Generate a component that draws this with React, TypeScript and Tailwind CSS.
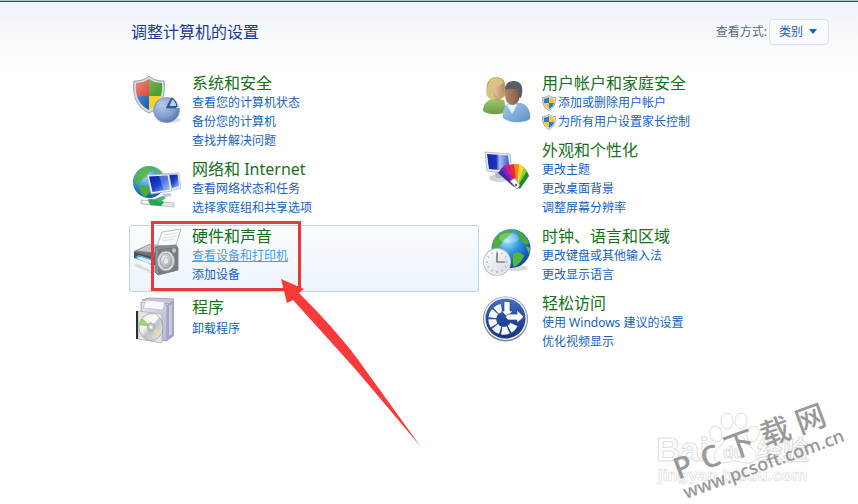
import type { ReactNode } from "react";

interface CategoryLink {
  label: string;
  shield?: boolean;
}

interface Category {
  title: string;
  icon: ReactNode;
  links: CategoryLink[];
  active?: boolean;
}

const ICON = "h-12 w-12 shrink-0";

function SecurityIcon() {
  return (
    <svg className={ICON} viewBox="0 0 48 48" aria-hidden="true">
      <defs>
        <clipPath id="sec-shield">
          <path d="M16 3C20 6 25 7 29 7C30 20 26 29 16 34C6 29 2 20 3 7C7 7 12 6 16 3Z" />
        </clipPath>
        <linearGradient id="sec-shine" x1="0" y1="0" x2="1" y2="1">
          <stop offset="0" stopColor="#fff" stopOpacity=".5" />
          <stop offset=".6" stopColor="#fff" stopOpacity="0" />
        </linearGradient>
        <radialGradient id="sec-disc" cx=".35" cy=".3" r=".8">
          <stop offset="0" stopColor="#b5cbe8" />
          <stop offset=".6" stopColor="#7f9fce" />
          <stop offset="1" stopColor="#4f70a8" />
        </radialGradient>
      </defs>
      <ellipse cx="36" cy="44" rx="12" ry="3" fill="#000" opacity=".12" />
      <path d="M16 0C20 4 26 5 31 5C33 20 28 32 16 37C4 32 -1 20 1 5C6 5 12 4 16 0Z" fill="#d9dcdf" stroke="#9ba0a5" strokeWidth="1" />
      <g clipPath="url(#sec-shield)">
        <path d="M0 0H16V20H0Z" fill="#d93a2b" />
        <path d="M16 0H32V20H16Z" fill="#4aa02c" />
        <path d="M0 20H16V38H0Z" fill="#2560b4" />
        <path d="M16 20H32V38H16Z" fill="#f6cf27" />
        <path d="M0 0H32V38H0Z" fill="url(#sec-shine)" />
      </g>
      <ellipse cx="33.500" cy="34" rx="13" ry="12.500" fill="url(#sec-disc)" stroke="#6583b5" strokeWidth=".6" />
      <path d="M32 33L38 21C43 23 46 27 46.500 32Z" fill="#dfe9f6" />
      <path d="M32.500 32.500L38 21.500L39.500 22L44 31L43 32.500Z" fill="#32569b" />
      <path d="M35.500 30.500L39 22.500C42 24 43.500 27 44 30.500Z" fill="#b9cfec" stroke="#2f5090" strokeWidth="1.200" />
    </svg>
  );
}

function NetworkIcon() {
  return (
    <svg className={ICON} viewBox="0 0 48 48" aria-hidden="true">
      <defs>
        <radialGradient id="net-globe" cx=".4" cy=".3" r=".8">
          <stop offset="0" stopColor="#9fe0ff" />
          <stop offset=".5" stopColor="#2f8fd4" />
          <stop offset="1" stopColor="#0d4a93" />
        </radialGradient>
        <linearGradient id="net-screen" x1="0" y1="0" x2="1" y2="1">
          <stop offset="0" stopColor="#0b1d9b" />
          <stop offset=".5" stopColor="#1a3fd0" />
          <stop offset="1" stopColor="#9cc5ff" />
        </linearGradient>
      </defs>
      <circle cx="16" cy="20" r="16" fill="url(#net-globe)" />
      <path d="M2 14C5 7 11 4 17 4C23 5 21 9 17 10C14 11 16 15 11 16C8 17 7 22 3 23C1 20 1 17 2 14Z" fill="#55b33f" opacity=".85" />
      <path d="M6 24C10 22 15 24 17 28C16 32 13 35 11 35C8 32 7 28 6 24Z" fill="#4bb02f" />
      <path d="M21 5C26 6 29 9 31 13L24 12Z" fill="#6abf4a" opacity=".7" />
      <path d="M27 12L46 11L48 26L41 28Z" fill="#e4e9f1" stroke="#a5afbe" strokeWidth=".6" />
      <path d="M35 13L44.500 12.500L46 24L39 26Z" fill="url(#net-screen)" />
      <path d="M14 13L36 12L39 29L18 32Z" fill="#f1f4f8" stroke="#a3adbb" strokeWidth=".7" />
      <path d="M16 14.500L34.500 13.500L37 27.500L19.500 30Z" fill="url(#net-screen)" />
      <path d="M26 14L34.500 13.500L37 27.500L31 28.500Z" fill="#c9deff" opacity=".35" />
      <path d="M29 32L37 31L39 34L31 35Z" fill="#c3cad4" />
      <path d="M8 38L41 41V45L8 42Z" fill="#e2e6e8" stroke="#aab2b5" strokeWidth=".7" />
      <path d="M15 37L27 37.500L31 40L28 44L17 43Z" fill="#2ca35c" />
      <path d="M21 37L30 34L33 36L27 40Z" fill="#43bb73" />
      <path d="M9 39L15 39.600V41L9 40.500Z" fill="#fff" />
    </svg>
  );
}

function HardwareIcon() {
  return (
    <svg className={ICON} viewBox="0 0 48 48" aria-hidden="true">
      <defs>
        <linearGradient id="hw-body" x1="0" y1="0" x2="0" y2="1">
          <stop offset="0" stopColor="#a9adb2" />
          <stop offset=".5" stopColor="#6b7076" />
          <stop offset="1" stopColor="#43474d" />
        </linearGradient>
        <radialGradient id="hw-cone" cx=".4" cy=".35" r=".7">
          <stop offset="0" stopColor="#f5f6f7" />
          <stop offset="1" stopColor="#9a9fa5" />
        </radialGradient>
      </defs>
      <path d="M3 34L22 43L20 45L1 37Z" fill="#000" opacity=".1" />
      <path d="M24 17L29 3L48 0L42 19Z" fill="#f8f9fa" stroke="#a9adb1" strokeWidth=".8" />
      <path d="M31 6L44 4M30 9L43 7M29 12L42 10" stroke="#d5d8db" strokeWidth=".8" />
      <path d="M1 22L16 15L40 17L34 30L22 36L1 28Z" fill="url(#hw-body)" />
      <path d="M4 21.500L16 16L38 17.500L26 24Z" fill="#c4c7cb" />
      <path d="M1 23L22 29V36L1 29Z" fill="#4b5056" />
      <path d="M2 28L6 26L22 31L18 36Z" fill="#58a9dc" />
      <path d="M3 29L8 28L20 32L17 35Z" fill="#d7effb" />
      <path d="M22 18L43 16L45 19V41L25 46L22 43Z" fill="#8b9096" stroke="#6a6f75" strokeWidth=".8" />
      <path d="M25 20L45 18V41L25 46Z" fill="#777c82" />
      <ellipse cx="33" cy="32" rx="8.500" ry="10" fill="#dcdfe2" stroke="#a2a7ac" strokeWidth="1" />
      <ellipse cx="33" cy="32" rx="6" ry="7.500" fill="url(#hw-cone)" stroke="#8d9298" strokeWidth=".7" />
      <ellipse cx="33" cy="32" rx="2.500" ry="3.500" fill="#e9ebed" stroke="#9da2a8" strokeWidth=".6" />
      <ellipse cx="41" cy="21.500" rx="2" ry="2.200" fill="#c4c8cc" />
    </svg>
  );
}

function ProgramsIcon() {
  return (
    <svg className={ICON} viewBox="0 0 48 48" aria-hidden="true">
      <defs>
        <linearGradient id="pr-box" x1="0" y1="0" x2="1" y2="1">
          <stop offset="0" stopColor="#e3e4f2" />
          <stop offset="1" stopColor="#b4b6d2" />
        </linearGradient>
        <linearGradient id="pr-disc" x1="0" y1="0" x2="1" y2="1">
          <stop offset="0" stopColor="#d3d7d6" />
          <stop offset=".35" stopColor="#fafafa" />
          <stop offset=".55" stopColor="#bfc4c2" />
          <stop offset="1" stopColor="#f1f0e8" />
        </linearGradient>
      </defs>
      <path d="M9 4L16 2L41 3L36 8Z" fill="#c5c6df" stroke="#9193b5" strokeWidth=".8" />
      <path d="M8 6L34 9V45L8 41Z" fill="url(#pr-box)" stroke="#9294b4" strokeWidth=".8" />
      <path d="M34 9L41 4V40L34 45Z" fill="#a3a5c6" />
      <path d="M36 10L39 8V38L36 40Z" fill="#c9cae0" />
      <path d="M13 4L32 6L30 14L10 12Z" fill="#f6f6fc" stroke="#b1b3cf" strokeWidth=".6" />
      <path d="M5 15L29 18V47L5 43Z" fill="#e3e6e6" stroke="#a5aaa9" strokeWidth=".7" />
      <path d="M3 15H5V43H3Z" fill="#2c2f31" />
      <ellipse cx="18" cy="31" rx="12" ry="13.500" fill="url(#pr-disc)" stroke="#9ea3a2" strokeWidth=".8" />
      <path d="M18 31L6 29L9 22Z" fill="#8fcf50" opacity=".85" />
      <path d="M18 31L29 36L25 42Z" fill="#e6dfa4" opacity=".7" />
      <path d="M18 31L21 18L26 21Z" fill="#fff" opacity=".9" />
      <ellipse cx="18" cy="31" rx="3.500" ry="4" fill="#c7cbca" stroke="#8f9594" strokeWidth=".7" />
      <ellipse cx="18" cy="31" rx="1.300" ry="1.600" fill="#fff" />
    </svg>
  );
}

function UsersIcon() {
  return (
    <svg className={ICON} viewBox="0 0 48 48" aria-hidden="true">
      <defs>
        <linearGradient id="us-green" x1="0" y1="0" x2="0" y2="1">
          <stop offset="0" stopColor="#a3c971" />
          <stop offset="1" stopColor="#6b9c45" />
        </linearGradient>
        <linearGradient id="us-blue" x1="0" y1="0" x2="1" y2="1">
          <stop offset="0" stopColor="#a9cdf0" />
          <stop offset="1" stopColor="#5b8fc9" />
        </linearGradient>
        <linearGradient id="us-face" x1="0" y1="0" x2="1" y2="0">
          <stop offset="0" stopColor="#e6c39d" />
          <stop offset="1" stopColor="#b98960" />
        </linearGradient>
        <linearGradient id="us-dark" x1="0" y1="0" x2="1" y2="0">
          <stop offset="0" stopColor="#b58763" />
          <stop offset="1" stopColor="#7a5a46" />
        </linearGradient>
      </defs>
      <path d="M0 35C0 28 4 24 11 22L21 24L24 36C16 39 5 39 0 35Z" fill="url(#us-green)" />
      <path d="M4 20C3 11 3 2 13 1C21 1 23 6 22 13L22 20L15 25Z" fill="#bfa565" />
      <path d="M11 10C15 10 18 8 20 6C22.500 10 22 19 18 22C13 23 10 17 11 10Z" fill="url(#us-face)" />
      <path d="M4 20C4 10 5 2 13 1.500C20 2 21 6 19 8C15 11 11 10 11 14C10 18 11 21 13 23C9 24 6 23 4 20Z" fill="#d9c283" />
      <path d="M20 42C19 34 22 29 28 26L38 27C45 29 48 36 47 43C39 48 26 47 20 42Z" fill="url(#us-blue)" />
      <path d="M24 29L29 38L34 29L31 27Z" fill="#e8f2fb" />
      <path d="M22 15C21 9 25 6 31 6C38 6 39 11 37 17L36 24C33 30 28 30 25 27C22 24 22 19 22 15Z" fill="url(#us-dark)" />
      <path d="M22 13C23 7 26 5 31 5C39 5 41 12 38 22L35 21L35 14C31 12 26 14 22 13Z" fill="#5a5d64" />
    </svg>
  );
}

function AppearanceIcon() {
  return (
    <svg className={ICON} viewBox="0 0 48 48" aria-hidden="true">
      <defs>
        <linearGradient id="ap-screen" x1="0" y1="0" x2="1" y2="0">
          <stop offset="0" stopColor="#1627a9" />
          <stop offset=".4" stopColor="#1a2fbd" />
          <stop offset=".55" stopColor="#a9c0f2" />
          <stop offset="1" stopColor="#3152cd" />
        </linearGradient>
      </defs>
      <ellipse cx="17" cy="35" rx="11" ry="4" fill="#d0d3d7" />
      <path d="M12 28H20L19 35H13Z" fill="#b3b9c1" />
      <path d="M2 9L27 11L29 31L4 28Z" fill="#e8edf3" stroke="#a9b1bd" strokeWidth=".8" />
      <path d="M4 11L25 12.500L27 28L6 26Z" fill="url(#ap-screen)" />
      <path d="M31 44L15 30L19 25L35 41Z" fill="#3d2a9d" />
      <path d="M32 44L18 26L22 22L36 41Z" fill="#7a23bd" />
      <path d="M33 44L21 23L26 21L37 41Z" fill="#d21b8e" />
      <path d="M33 44L26 22L31 21L38 41Z" fill="#e62f33" />
      <path d="M34 44L31 21L36 21L39 41Z" fill="#f28a1b" />
      <path d="M34 44L36 21L41 24L39 41Z" fill="#f4da29" />
      <path d="M34 44L41 24L44 28L39 42Z" fill="#8ed02d" />
      <path d="M34 44L44 28L46 33L37 46Z" fill="#248b34" />
      <path d="M27 38L32 35L37 42L34 46Z" fill="#f3f4f6" stroke="#8b8f96" strokeWidth=".7" />
      <circle cx="33" cy="42" r="1.200" fill="#666" />
    </svg>
  );
}

function ClockIcon() {
  return (
    <svg className={ICON} viewBox="0 0 48 48" aria-hidden="true">
      <defs>
        <radialGradient id="ck-globe" cx=".4" cy=".3" r=".75">
          <stop offset="0" stopColor="#a9e8ff" />
          <stop offset=".45" stopColor="#2c8fdd" />
          <stop offset="1" stopColor="#0b3f97" />
        </radialGradient>
        <linearGradient id="ck-face" x1="0" y1="0" x2="1" y2="1">
          <stop offset="0" stopColor="#fff" />
          <stop offset="1" stopColor="#d3dae0" />
        </linearGradient>
      </defs>
      <ellipse cx="33" cy="39" rx="12" ry="3" fill="#000" opacity=".15" />
      <circle cx="28" cy="19.500" r="19.500" fill="url(#ck-globe)" />
      <path d="M10 14C12 7 19 1 27 1C31 2 30 5 26 6C25 9 20 10 19 14C17 18 12 19 9 20Z" fill="#4faf3c" />
      <path d="M31 1C38 2 44 8 46 14C45 17 42 15 39 13C36 11 37 7 31 1Z" fill="#4da63a" />
      <path d="M30 25C34 22 39 24 41 27C39 32 35 36 31 38C29 34 30 30 30 25Z" fill="#55b53a" />
      <path d="M43 17L47 19L46 25Z" fill="#6abd43" />
      <ellipse cx="26" cy="9" rx="10" ry="5" fill="#fff" opacity=".25" />
      <circle cx="14" cy="33" r="14" fill="#c0c5ca" />
      <circle cx="14" cy="33" r="12.500" fill="url(#ck-face)" stroke="#f5f6f7" strokeWidth="1" />
      <path d="M14 22V24M14 42V44M3 33H5M23 33H25M8.500 23.500L9.500 25.200M19.500 23.500L18.500 25.200M4.500 27.500L6.200 28.500M23.500 27.500L21.800 28.500M4.500 38.500L6.200 37.500M23.500 38.500L21.800 37.500M8.500 42.500L9.500 40.800M19.500 42.500L18.500 40.800" stroke="#9ba0a5" strokeWidth="1" />
      <path d="M14 24V33H22" fill="none" stroke="#4a5056" strokeWidth="1.200" />
    </svg>
  );
}

function EaseIcon() {
  return (
    <svg className={ICON} viewBox="0 0 48 48" aria-hidden="true">
      <defs>
        <linearGradient id="ea-bg" x1="0" y1="0" x2="0" y2="1">
          <stop offset="0" stopColor="#4a6fc4" />
          <stop offset=".5" stopColor="#2648a3" />
          <stop offset="1" stopColor="#16357f" />
        </linearGradient>
      </defs>
      <circle cx="22.500" cy="23" r="22.500" fill="#7d8594" />
      <circle cx="22.500" cy="22.500" r="21.500" fill="#f3f5f8" />
      <circle cx="22.500" cy="22.500" r="20" fill="url(#ea-bg)" />
      <path d="M31 28.500A11.500 11.500 0 1 1 18.500 12" fill="none" stroke="#f4f7fc" strokeWidth="8" strokeDasharray="6.500 1.500" />
      <path d="M21 5.500H27V15H30L24 21L18.500 15H21Z" fill="#fff" stroke="#2648a3" strokeWidth=".7" />
      <path d="M25 18H34V14L41 21L34 27V24H25L22.500 21Z" fill="#fff" stroke="#2648a3" strokeWidth=".7" />
    </svg>
  );
}

function ShieldBadge() {
  return (
    <svg className="h-4 w-3.5 shrink-0" viewBox="0 0 14 16" aria-hidden="true">
      <path d="M7 .5C9 2 11 2.500 13.500 2.500C13.500 9 12 13 7 15.500C2 13 .5 9 .5 2.500C3 2.500 5 2 7 .5Z" fill="#e8eaec" stroke="#8d949b" strokeWidth=".8" />
      <path d="M7 2V8H2C1.800 6.500 1.800 5 1.800 3.700C4 3.600 5.500 3 7 2Z" fill="#2a7ad0" />
      <path d="M7 2C8.500 3 10 3.600 12.200 3.700C12.200 5 12.200 6.500 12 8H7Z" fill="#f6c72b" />
      <path d="M2 8H7V14C4 12.500 2.500 10.500 2 8Z" fill="#f6c72b" />
      <path d="M12 8H7V14C10 12.500 11.500 10.500 12 8Z" fill="#2a7ad0" />
    </svg>
  );
}

const leftColumn: Category[] = [
  {
    title: "系统和安全",
    icon: <SecurityIcon />,
    links: [{ label: "查看您的计算机状态" }, { label: "备份您的计算机" }, { label: "查找并解决问题" }],
  },
  {
    title: "网络和 Internet",
    icon: <NetworkIcon />,
    links: [{ label: "查看网络状态和任务" }, { label: "选择家庭组和共享选项" }],
  },
  {
    title: "硬件和声音",
    icon: <HardwareIcon />,
    links: [{ label: "查看设备和打印机" }, { label: "添加设备" }],
    active: true,
  },
  {
    title: "程序",
    icon: <ProgramsIcon />,
    links: [{ label: "卸载程序" }],
  },
];

const rightColumn: Category[] = [
  {
    title: "用户帐户和家庭安全",
    icon: <UsersIcon />,
    links: [
      { label: "添加或删除用户帐户", shield: true },
      { label: "为所有用户设置家长控制", shield: true },
    ],
  },
  {
    title: "外观和个性化",
    icon: <AppearanceIcon />,
    links: [{ label: "更改主题" }, { label: "更改桌面背景" }, { label: "调整屏幕分辨率" }],
  },
  {
    title: "时钟、语言和区域",
    icon: <ClockIcon />,
    links: [{ label: "更改键盘或其他输入法" }, { label: "更改显示语言" }],
  },
  {
    title: "轻松访问",
    icon: <EaseIcon />,
    links: [{ label: "使用 Windows 建议的设置" }, { label: "优化视频显示" }],
  },
];

// Red frame and arrow pointing at the highlighted category
function Callout() {
  return (
    <>
      <div className="pointer-events-none absolute -top-[5px] left-[21px] h-[70px] w-[150px] border-[3px] border-[#e8383d]" />
      <svg
        className="pointer-events-none absolute top-[52px] left-[150px] h-[170px] w-[142px]"
        viewBox="0 0 142 170"
        aria-hidden="true"
      >
        <path d="M1 1L24 11L19 15Q62 58 84 90L141 169L77 93Q42 54 13 22L7 25Z" fill="#f93a3a" />
      </svg>
    </>
  );
}

function CategoryItem({ category }: { category: Category }) {
  const single = category.links.length === 1;

  return (
    <section
      className={`relative flex gap-[11px] rounded-xs border pl-[3px] ${
        category.active
          ? "border-[#b9d7f0] bg-linear-to-b from-[#fafcfe] to-[#edf4fc]"
          : "border-transparent"
      }`}
    >
      <div className="pt-[3px]">{category.icon}</div>
      <div className={single ? "flex flex-col gap-0.5 pt-1 pb-1" : "pb-[7px]"}>
        <h2 className="text-base leading-5 text-[#17701c]">
          <a href="#">{category.title}</a>
        </h2>
        <ul>
          {category.links.map((link, i) => (
            <li key={link.label} className="flex h-[19px] items-center gap-0.5 text-xs leading-[19px]">
              {link.shield && <ShieldBadge />}
              <a
                href="#"
                className={
                  category.active && i === 0
                    ? "text-[#4a9be8] underline"
                    : "text-[#1563bd] hover:underline"
                }
              >
                {link.label}
              </a>
            </li>
          ))}
        </ul>
      </div>
      {category.active && <Callout />}
    </section>
  );
}

function Watermark() {
  return (
    <div className="pointer-events-none absolute right-0 bottom-0 h-28 w-52" aria-hidden="true">
      <svg className="h-full w-full" viewBox="0 0 208 112">
        <g fill="#fff" stroke="#dedede" strokeWidth="1">
          <ellipse cx="66" cy="42" rx="6" ry="8" transform="rotate(-15 66 42)" />
          <ellipse cx="77" cy="29" rx="6" ry="8" />
          <ellipse cx="91" cy="29" rx="6" ry="8" />
          <ellipse cx="103" cy="42" rx="6" ry="8" transform="rotate(20 103 42)" />
          <path d="M85 42C93 42 95 50 102 56C110 63 106 71 98 71C92 71 89 69 85 69C81 69 78 71 72 71C64 71 61 63 68 56C75 50 77 42 85 42Z" />
          <text x="6" y="69" fontSize="34" fontWeight="700" fontFamily="Liberation Sans, sans-serif">Bai</text>
          <text x="73" y="66" fontSize="17" fontWeight="700" fontFamily="Liberation Sans, sans-serif">du</text>
          <text x="107" y="68" fontSize="26" fontWeight="700" fontFamily="Noto Sans CJK SC, sans-serif">经验</text>
          <text x="8" y="89" fontSize="17" fontWeight="700" strokeWidth=".7" fontFamily="Liberation Sans, sans-serif">jingyan.baidu.com</text>
        </g>
        <g fill="#999" fontFamily="Open Sans, Noto Sans CJK SC, sans-serif">
          <g fontSize="30" fontWeight="500">
            <text transform="translate(28 88) rotate(-20)" fontWeight="600">P</text>
            <text transform="translate(55 78) rotate(-20)" fontWeight="600">C</text>
            <text transform="translate(79 68) rotate(-20)">下</text>
            <text transform="translate(115 55) rotate(-20)">载</text>
            <text transform="translate(150 42) rotate(-20)">网</text>
          </g>
          <text transform="translate(36 107) rotate(-20)" fontSize="18" fontWeight="600">www.pcsoft.com.cn</text>
        </g>
      </svg>
    </div>
  );
}

export default function App() {
  return (
    <div className="relative min-h-screen overflow-hidden bg-white font-['Noto_Sans','Noto_Sans_CJK_SC',sans-serif]">
      <div className="h-[2px] border-b border-[#2c4f4f] bg-[#a5c8bd]" />
      <div className="bg-linear-to-b from-[#eff3f9] to-white">
        <header className="flex items-center justify-between pt-[17px] pr-[29px] pl-[131px]">
          <h1 className="text-base leading-[26px] text-[#1a3a94]">调整计算机的设置</h1>
          <div className="flex items-center gap-0.5 text-xs">
            <label htmlFor="view-mode" className="text-[#5b6b80]">
              查看方式:
            </label>
            <div className="relative">
              <select
                id="view-mode"
                defaultValue="category"
                className="h-[26px] w-[60px] appearance-none rounded-sm border border-[#d5e3f0] bg-[#f9fbfe] pl-[9px] text-xs text-[#1563bd]"
              >
                <option value="category">类别</option>
                <option value="large">大图标</option>
                <option value="small">小图标</option>
              </select>
              <svg className="pointer-events-none absolute top-[10px] right-3 h-[5px] w-2" viewBox="0 0 8 5" aria-hidden="true">
                <path d="M0 0H8L4 5Z" fill="#1563bd" />
              </svg>
            </div>
          </div>
        </header>
        <div className="h-[27px]" />
      </div>
      <main className="grid grid-cols-2 items-start pr-[29px] pl-[129px]">
        <div>
          {leftColumn.map(c => (
            <CategoryItem key={c.title} category={c} />
          ))}
        </div>
        <div>
          {rightColumn.map(c => (
            <CategoryItem key={c.title} category={c} />
          ))}
        </div>
      </main>
      <Watermark />
    </div>
  );
}
